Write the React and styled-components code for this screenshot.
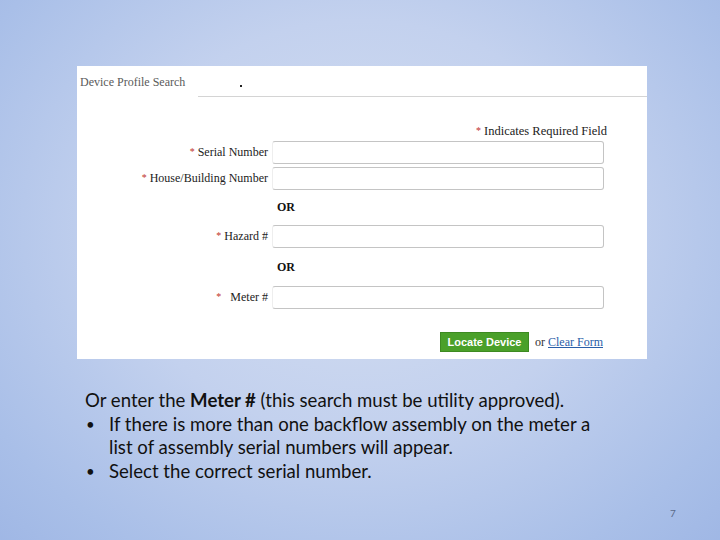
import React from "react";
import styled, { createGlobalStyle } from "styled-components";

const Global = createGlobalStyle`
  html, body { margin: 0; padding: 0; }
  body { width: 720px; height: 540px; overflow: hidden; }
`;

const Slide = styled.div`
  position: relative;
  width: 720px;
  height: 540px;
  box-sizing: border-box;
  padding: 66px 0 0 77px;
  background: radial-gradient(ellipse 75% 85% at 50% 42%, #d4def1 0%, #c3d1ee 45%, #a9bfe8 80%, #9db5e4 100%);
  display: flex;
  flex-direction: column;
`;

const Panel = styled.div`
  width: 570px;
  height: 293px;
  background: #fff;
  display: flex;
  flex-direction: column;
  font-family: "Liberation Serif", "DejaVu Serif", serif;
`;

const Header = styled.div`
  display: flex;
  height: 31px;
`;

const Title = styled.div`
  width: 118px;
  padding-left: 3px;
  padding-top: 9px;
  font-size: 12px;
  color: #5a5a5a;
  white-space: nowrap;
`;

const HeaderRule = styled.div`
  flex: 1;
  border-bottom: 1px solid #d4d4d4;
  position: relative;
`;

const Dot = styled.span`
  position: absolute;
  left: 42px;
  top: 19px;
  width: 1.5px;
  height: 1.5px;
  background: #222;
`;

const Note = styled.div`
  margin-top: 27px;
  width: 530px;
  text-align: right;
  font-size: 12.5px;
  color: #222;
  line-height: 14px;
`;

const Star = styled.span`
  color: #c0302a;
  font-size: 10px;
  vertical-align: 1px;
  margin-right: 3px;
`;

const Form = styled.div`
  display: grid;
  grid-template-columns: 191px 332px;
  column-gap: 4px;
  margin-top: ${p => p.$mt || 0}px;
`;

const Label = styled.div`
  text-align: right;
  font-size: 12px;
  color: #222;
  align-self: center;
  white-space: nowrap;
`;

const Input = styled.div`
  height: 21px;
  border: 1px solid #c4c4c4;
  border-left-color: #eee;
  border-radius: 3px;
  background: #fff;
`;

const Or = styled.div`
  grid-column: 2;
  font-weight: bold;
  font-size: 12px;
  color: #111;
  padding-left: 5px;
  height: ${p => p.$h}px;
  display: flex;
  align-items: center;
`;

const Actions = styled.div`
  display: flex;
  align-items: center;
  margin-top: 23px;
  padding-left: 363px;
  gap: 6px;
`;

const Button = styled.div`
  width: 89px;
  height: 20px;
  background: #4aa02a;
  border: 1px solid #3d8a22;
  box-sizing: border-box;
  color: #fff;
  font-family: "Liberation Sans", Arial, sans-serif;
  font-weight: bold;
  font-size: 11px;
  display: flex;
  align-items: center;
  justify-content: center;
`;

const OrText = styled.span`
  font-size: 12px;
  color: #333;
`;

const Link = styled.span`
  color: #2a5ea8;
  text-decoration: underline;
`;

const Body = styled.div`
  margin-top: 30px;
  margin-left: 8px;
  width: 520px;
  font-family: Lato, "Open Sans", sans-serif;
  font-size: 18.6px;
  line-height: 23.5px;
  color: #111;
`;

const Line = styled.div`
  white-space: nowrap;
`;

const Bullets = styled.ul`
  list-style: none;
  margin: 0;
  padding: 0;
`;

const Item = styled.li`
  display: flex;
`;

const BulletMark = styled.span`
  width: 23px;
  flex: none;
  padding-left: 1px;
  font-size: 15px;
`;

const PageNo = styled.div`
  position: absolute;
  left: 670px;
  top: 507px;
  font-family: Lato, sans-serif;
  font-size: 10px;
  color: #5a6a88;
`;

export default function App() {
  return (
    <>
      <Global />
      <Slide>
        <Panel>
          <Header>
            <Title>Device Profile Search</Title>
            <HeaderRule><Dot /></HeaderRule>
          </Header>
          <Note><Star>*</Star>Indicates Required Field</Note>
          <Form $mt={3}>
            <Label><Star>*</Star>Serial Number</Label>
            <Input />
          </Form>
          <Form $mt={3}>
            <Label><Star>*</Star>House/Building Number</Label>
            <Input />
          </Form>
          <Form>
            <Or $h={35}>OR</Or>
          </Form>
          <Form>
            <Label><Star>*</Star>Hazard #</Label>
            <Input />
          </Form>
          <Form>
            <Or $h={38}>OR</Or>
          </Form>
          <Form>
            <Label><Star>*</Star>&nbsp; Meter #</Label>
            <Input />
          </Form>
          <Actions>
            <Button>Locate Device</Button>
            <OrText>or <Link>Clear Form</Link></OrText>
          </Actions>
        </Panel>
        <Body>
          <Line>Or enter the <b>Meter #</b> (this search must be utility approved).</Line>
          <Bullets>
            <Item>
              <BulletMark>•</BulletMark>
              <span>If there is more than one backflow assembly on the meter a list of assembly serial numbers will appear.</span>
            </Item>
            <Item>
              <BulletMark>•</BulletMark>
              <span>Select the correct serial number.</span>
            </Item>
          </Bullets>
        </Body>
        <PageNo>7</PageNo>
      </Slide>
    </>
  );
}
